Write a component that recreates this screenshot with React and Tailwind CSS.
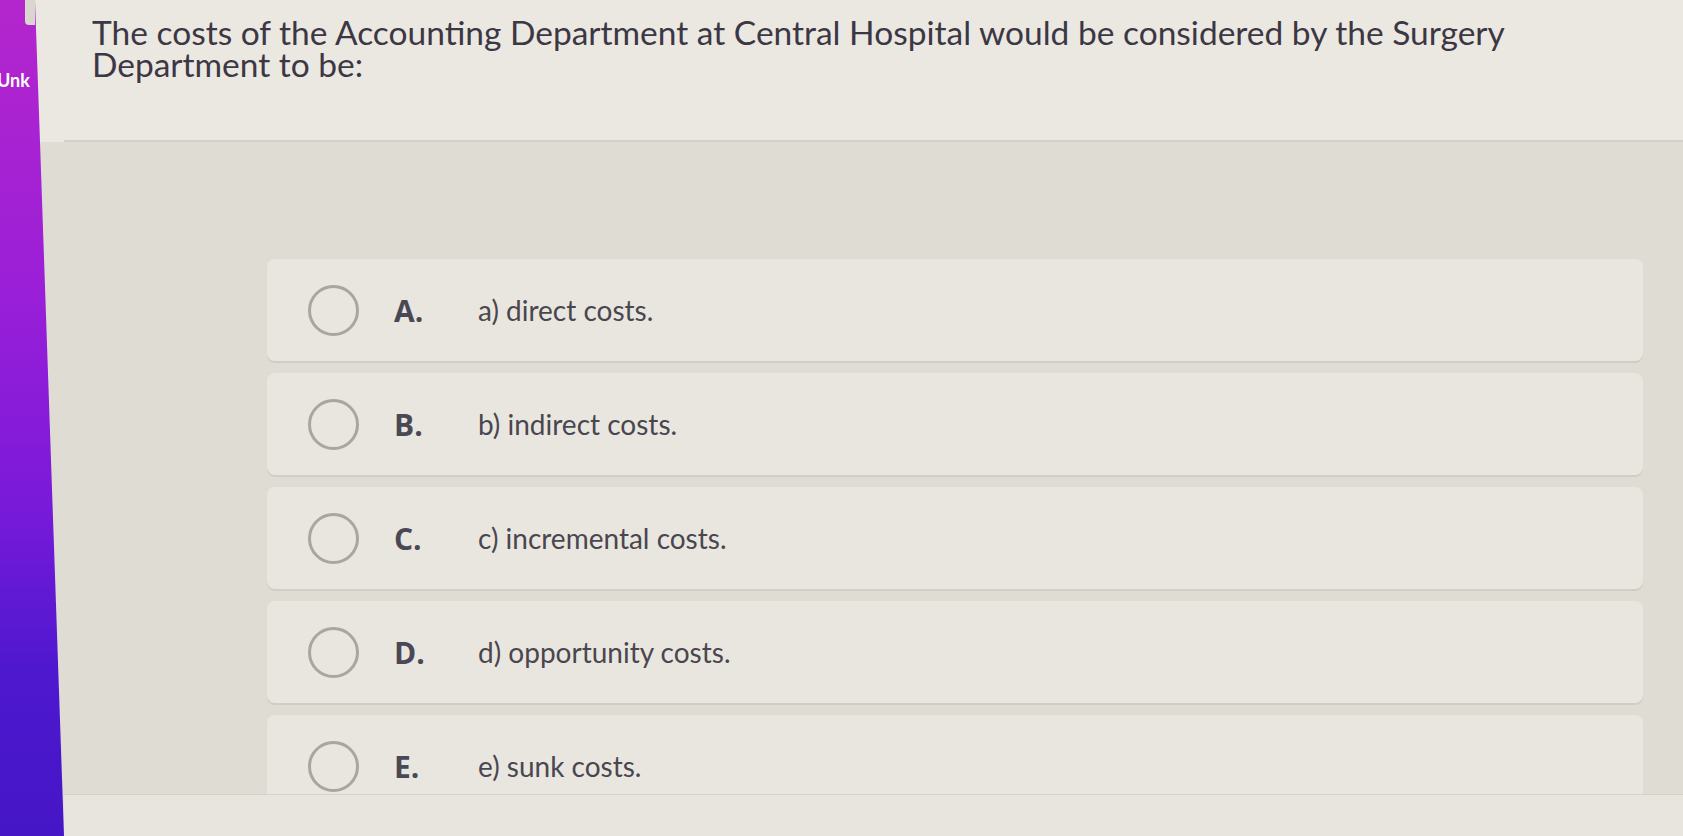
import React from "react";

const options = [
  { letter: "A.", text: "a) direct costs." },
  { letter: "B.", text: "b) indirect costs." },
  { letter: "C.", text: "c) incremental costs." },
  { letter: "D.", text: "d) opportunity costs." },
  { letter: "E.", text: "e) sunk costs." },
];

function Radio() {
  return (
    <span className="block h-[51px] w-[51px] shrink-0 rounded-full border-[3px] border-[#aaa69f]" />
  );
}

function Option({ letter, text }) {
  return (
    <div className="flex h-[102px] shrink-0 items-center rounded-lg bg-[#e9e6df] pl-[41px] shadow-[0_2px_0_#d1cdc5]">
      <Radio />
      <span className="ml-[35px] w-[58px] font-['Open_Sans',sans-serif] text-[30px] font-bold text-[#4b4855]">
        {letter}
      </span>
      <span className="ml-[26px] text-[28px] text-[#4a4650]">{text}</span>
    </div>
  );
}

export default function App() {
  return (
    <div className="flex h-[836px] w-full overflow-hidden bg-[#dfdcd4] font-['Lato',sans-serif]">
      {/* sidebar, slanted by the photo's perspective */}
      <aside className="flex w-[64px] shrink-0 flex-col">
        <div className="h-[142px] bg-[#ebe8e1]">
          <div className="flex h-full flex-col bg-[linear-gradient(180deg,#b426cc_0%,#9a1fd8_35%,#7a1ad9_60%,#4e18cf_80%,#4516c6_100%)] bg-fixed [clip-path:polygon(0_0,35px_0,40px_100%,0_100%)]">
            <div className="ml-[25px] h-[25px] w-[10px] rounded-bl-sm bg-[#d9d6d0]" />
            <span className="ml-[-3px] mt-[46px] text-[18px] font-bold leading-none text-white">
              Unk
            </span>
          </div>
        </div>
        <div className="flex-1 bg-[#dfdcd4]">
          <div className="h-full bg-[linear-gradient(180deg,#b426cc_0%,#9a1fd8_35%,#7a1ad9_60%,#4e18cf_80%,#4516c6_100%)] bg-fixed [clip-path:polygon(0_0,40px_0,64px_100%,0_100%)]" />
        </div>
      </aside>

      <main className="flex min-w-0 flex-1 flex-col">
        <header className="h-[142px] shrink-0 border-b-2 border-[#d3d0c8] bg-[#ebe8e1] pl-[28px] pt-[16px]">
          <h1 className="text-[33.5px] leading-[32px] text-[#3c3744]">
            The costs of the Accounting Department at Central Hospital would be considered by the Surgery
            <br />
            Department to be:
          </h1>
        </header>

        <section className="flex flex-1 flex-col gap-[12px] overflow-hidden pl-[203px] pr-[40px] pt-[117px]">
          {options.map((o) => (
            <Option key={o.letter} letter={o.letter} text={o.text} />
          ))}
        </section>

        <footer className="h-[42px] shrink-0 border-t border-[#d6d2ca] bg-[#e8e5de]" />
      </main>
    </div>
  );
}
